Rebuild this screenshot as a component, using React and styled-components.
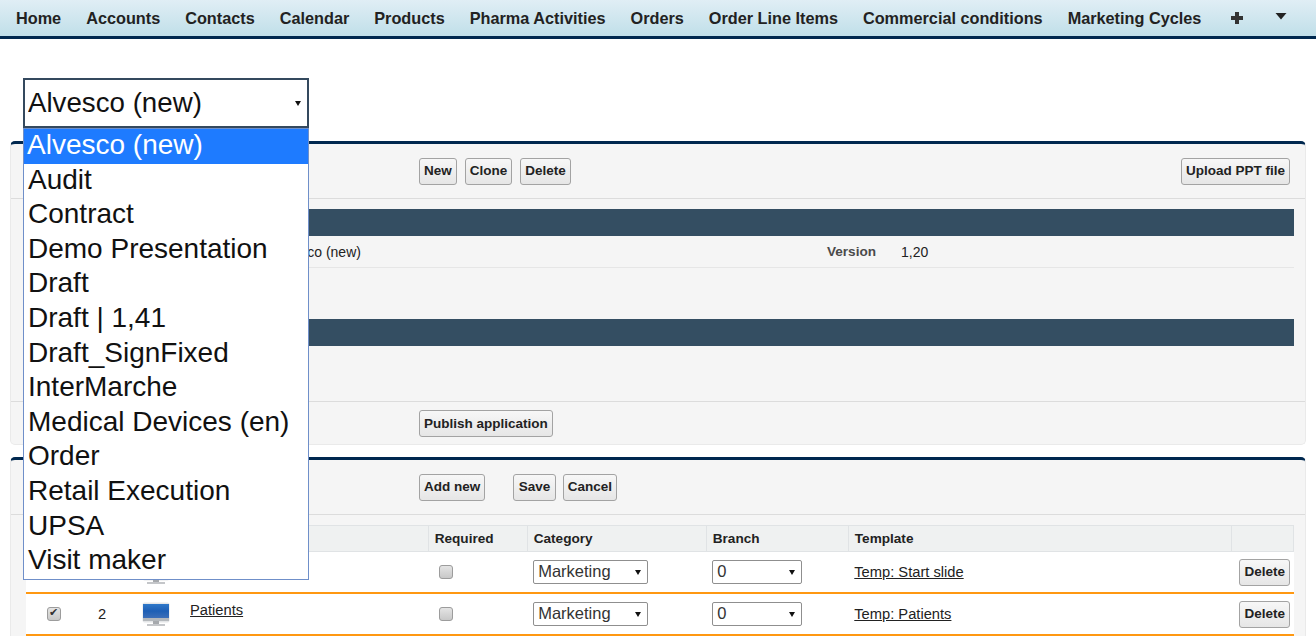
import styled, { createGlobalStyle } from 'styled-components';

const GlobalStyle = createGlobalStyle`
    html, body {
        margin: 0;
        height: 100%;
        overflow: hidden;
        background: #fff;
        font-family: "Liberation Sans", Arial, sans-serif;
        font-size: 14px;
        color: #222;
    }
`;

const NavBar = styled.nav`
    display: flex;
    align-items: center;
    gap: 25px;
    height: 36px;
    padding: 0 0 0 16px;
    background: linear-gradient(#e0eef5, #c0dfe9);
    border-bottom: 3px solid #00284f;
`;

const NavItem = styled.a`
    font-size: 16.25px;
    font-weight: bold;
    color: #222;
    white-space: nowrap;
`;

const NavIcon = styled.span`
    display: flex;
    align-items: center;
    margin-left: ${(p) => p.$shift || 0}px;
`;

const TopArea = styled.div`
    padding: 39px 0 0 23px;
    height: 63px;
`;

const SelectWrap = styled.div`
    position: relative;
    width: 286px;
`;

const AppSelect = styled.select`
    display: block;
    box-sizing: border-box;
    width: 286px;
    height: 50px;
    padding: 0 0 2px 3px;
    appearance: none;
    background: #fff;
    border: 2px solid #34495e;
    border-radius: 0;
    font-family: "Liberation Sans", Arial, sans-serif;
    font-size: 27.7px;
    color: #111;
`;

const SelectArrow = styled.span`
    position: absolute;
    right: ${(p) => p.$right}px;
    top: 50%;
    margin-top: -2px;
    border-left: ${(p) => p.$size}px solid transparent;
    border-right: ${(p) => p.$size}px solid transparent;
    border-top: ${(p) => p.$size + 2}px solid #111;
    pointer-events: none;
`;

const OptionList = styled.ul`
    position: absolute;
    z-index: 5;
    top: 50px;
    left: 0;
    box-sizing: border-box;
    width: 286px;
    height: 452px;
    margin: 0;
    padding: 0;
    list-style: none;
    background: #fff;
    border: 1px solid #6f8fc9;
`;

const OptionItem = styled.li`
    height: 34.6px;
    line-height: 32px;
    padding-left: ${(p) => (p.$active ? 3 : 4)}px;
    font-size: 28px;
    color: ${(p) => (p.$active ? '#fff' : '#111')};
    background: ${(p) => (p.$active ? '#1e7bff' : '#fff')};
    white-space: nowrap;
`;

const Panel = styled.section`
    box-sizing: border-box;
    margin: 0 10px ${(p) => p.$gap || 0}px;
    height: ${(p) => p.$height}px;
    background: #f5f5f5;
    border: 1px solid #eaeaea;
    border-top: 3px solid #00284f;
    border-radius: 5px;
`;

const PanelBar = styled.div`
    box-sizing: border-box;
    display: flex;
    align-items: center;
    gap: ${(p) => p.$gap || 8}px;
    height: ${(p) => p.$height}px;
    padding: 0 15px 0 408px;
    border-bottom: ${(p) => (p.$plain ? 0 : 1)}px solid #dcdcdc;
    border-top: ${(p) => (p.$top ? 1 : 0)}px solid #dcdcdc;
`;

const Button = styled.button`
    box-sizing: border-box;
    height: 27px;
    padding: 0 ${(p) => p.$pad || 4}px 1px;
    background: linear-gradient(#f7f7f7, #e6e6e6);
    border: 1px solid #a3a3a3;
    border-radius: 3px;
    font-family: "Liberation Sans", Arial, sans-serif;
    font-size: 13.5px;
    font-weight: bold;
    color: #222;
    white-space: nowrap;
    margin-left: ${(p) => p.$shift || 0}px;
`;

const Spacer = styled.div`
    flex: 1;
`;

const SectionBar = styled.div`
    height: 27px;
    margin: ${(p) => p.$top}px 11px 0 15px;
    background: #344e62;
`;

const SectionBody = styled.div`
    height: 55px;
`;

const DetailRow = styled.div`
    box-sizing: border-box;
    display: flex;
    align-items: center;
    height: 32px;
    margin: 0 11px 0 15px;
    border-bottom: 1px solid #e6e6e6;
`;

const DetailLabel = styled.span`
    margin-left: ${(p) => p.$left}px;
    font-size: 13.6px;
    font-weight: bold;
    color: #4a4a4a;
`;

const DetailValue = styled.span`
    margin-left: ${(p) => p.$left}px;
    font-size: 14px;
    color: #222;
`;

const ItemsTable = styled.table`
    width: 1268px;
    margin: 10px 0 0 15px;
    border-collapse: collapse;
    table-layout: fixed;
    background: #fff;
`;

const HeadCell = styled.th`
    box-sizing: border-box;
    height: 26px;
    padding: 0 0 0 6px;
    background: #eff1f1;
    border: 1px solid #e0e3e5;
    border-width: 1px 1px 1px 0;
    text-align: left;
    font-size: 13.6px;
    font-weight: bold;
    color: #222;
`;

const Row = styled.tr`
    border-bottom: 2px solid #ff9811;
`;

const Cell = styled.td`
    height: 40px;
    padding: 0 0 0 ${(p) => p.$pad || 0}px;
    text-align: ${(p) => p.$align || 'left'};
    vertical-align: middle;
    font-size: 14.7px;
`;

const Check = styled.input.attrs({ type: 'checkbox', readOnly: true })`
    appearance: none;
    position: relative;
    top: -1px;
    display: inline-block;
    box-sizing: border-box;
    width: 14px;
    height: 14px;
    margin: 0;
    vertical-align: middle;
    background: linear-gradient(#e4e4e4, #c8c8c8);
    border: 1px solid #9c9c9c;
    border-radius: 3px;

    &:checked::after {
        content: '✔';
        position: absolute;
        left: 1px;
        top: -2px;
        font-family: "DejaVu Sans", sans-serif;
        font-size: 11px;
        color: #333;
    }
`;

const RowLink = styled.a`
    color: #222;
    text-decoration: underline;
    position: relative;
    top: ${(p) => p.$lift || 0}px;
`;

const SmallSelect = styled.div`
    position: relative;
    width: ${(p) => p.$width}px;
`;

const SmallSelectBox = styled.select`
    display: block;
    box-sizing: border-box;
    width: 100%;
    height: 24px;
    padding: 0 0 2px 4px;
    appearance: none;
    background: #fff;
    border: 1px solid #8f8f8f;
    border-radius: 2px;
    font-family: "Liberation Sans", Arial, sans-serif;
    font-size: 16.5px;
    color: #333;
`;

const NAV_ITEMS = [
    'Home', 'Accounts', 'Contacts', 'Calendar', 'Products', 'Pharma Activities',
    'Orders', 'Order Line Items', 'Commercial conditions', 'Marketing Cycles',
];

const APPS = [
    'Alvesco (new)', 'Audit', 'Contract', 'Demo Presentation', 'Draft', 'Draft | 1,41',
    'Draft_SignFixed', 'InterMarche', 'Medical Devices (en)', 'Order', 'Retail Execution',
    'UPSA', 'Visit maker',
];

const COLUMNS = [48, 54, 54, 246, 99, 179, 142, 383, 62];

const SLIDES = [
    { num: 1, name: 'Start slide', template: 'Temp: Start slide', checked: true, nameLift: -4 },
    { num: 2, name: 'Patients', template: 'Temp: Patients', checked: true, nameLift: -4 },
];

function MonitorIcon() {
    return (
        <svg width="28" height="25" viewBox="0 0 28 25" style={{ display: 'block' }}>
            <defs>
                <linearGradient id="screen" x1="0" y1="0" x2="0" y2="1">
                    <stop offset="0" stopColor="#2f78c9" />
                    <stop offset="0.5" stopColor="#1e5fb5" />
                    <stop offset="1" stopColor="#3d6fb8" />
                </linearGradient>
            </defs>
            <rect x="0.5" y="0.5" width="27" height="20" rx="2" fill="#e4e6e8" />
            <rect x="1" y="2" width="26" height="14" fill="url(#screen)" />
            <rect x="1" y="16" width="26" height="3" fill="#b4b8bc" />
            <rect x="11" y="19" width="6" height="3" fill="#a6a9ad" />
            <rect x="5" y="22" width="18" height="2" fill="#c4c6c9" />
        </svg>
    );
}

function SlideRow({ slide }) {
    return (
        <Row>
            <Cell $pad={21}><Check defaultChecked={slide.checked} /></Cell>
            <Cell $pad={24}>{slide.num}</Cell>
            <Cell $pad={14}><MonitorIcon /></Cell>
            <Cell $pad={8}><RowLink $lift={slide.nameLift}>{slide.name}</RowLink></Cell>
            <Cell $pad={11}><Check /></Cell>
            <Cell $pad={6}>
                <SmallSelect $width={115}>
                    <SmallSelectBox defaultValue="Marketing"><option>Marketing</option></SmallSelectBox>
                    <SelectArrow $right={7} $size={3} />
                </SmallSelect>
            </Cell>
            <Cell $pad={6}>
                <SmallSelect $width={90}>
                    <SmallSelectBox defaultValue="0"><option>0</option></SmallSelectBox>
                    <SelectArrow $right={7} $size={3} />
                </SmallSelect>
            </Cell>
            <Cell $pad={6}><RowLink>{slide.template}</RowLink></Cell>
            <Cell $pad={8}><Button>Delete</Button></Cell>
        </Row>
    );
}

export default function App() {
    return (
        <>
            <GlobalStyle />
            <NavBar>
                {NAV_ITEMS.map((item) => <NavItem key={item}>{item}</NavItem>)}
                <NavIcon $shift={5}>
                    <svg width="12" height="12" viewBox="0 0 12 12">
                        <path d="M4 0h4v4h4v4H8v4H4V8H0V4h4z" fill="#333" />
                    </svg>
                </NavIcon>
                <NavIcon $shift={7}>
                    <svg width="12" height="14" viewBox="0 0 12 14">
                        <path d="M0.5 2h11L6 8.5z" fill="#222" />
                    </svg>
                </NavIcon>
            </NavBar>

            <TopArea>
                <SelectWrap>
                    <AppSelect defaultValue={APPS[0]}><option>{APPS[0]}</option></AppSelect>
                    <SelectArrow $right={8} $size={3} />
                    <OptionList>
                        {APPS.map((app, i) => (
                            <OptionItem key={app} $active={i === 0}>{app}</OptionItem>
                        ))}
                    </OptionList>
                </SelectWrap>
            </TopArea>

            <Panel $height={304} $gap={12}>
                <PanelBar $height={55}>
                    <Button>New</Button>
                    <Button>Clone</Button>
                    <Button>Delete</Button>
                    <Spacer />
                    <Button>Upload PPT file</Button>
                </PanelBar>
                <SectionBar $top={10} />
                <DetailRow>
                    <DetailValue $left={247}>Alvesco (new)</DetailValue>
                    <DetailLabel $left={466}>Version</DetailLabel>
                    <DetailValue $left={25}>1,20</DetailValue>
                </DetailRow>
                <SectionBar $top={51} />
                <SectionBody />
                <PanelBar $height={44} $plain $top>
                    <Button>Publish application</Button>
                </PanelBar>
            </Panel>

            <Panel $height={300}>
                <PanelBar $height={55} $gap={7}>
                    <Button>Add new</Button>
                    <Button $shift={21} $pad={4.5}>Save</Button>
                    <Button>Cancel</Button>
                </PanelBar>
                <ItemsTable>
                    <colgroup>
                        {COLUMNS.map((w, i) => <col key={i} style={{ width: w }} />)}
                    </colgroup>
                    <thead>
                        <tr>
                            <HeadCell />
                            <HeadCell />
                            <HeadCell />
                            <HeadCell>Name</HeadCell>
                            <HeadCell>Required</HeadCell>
                            <HeadCell>Category</HeadCell>
                            <HeadCell>Branch</HeadCell>
                            <HeadCell>Template</HeadCell>
                            <HeadCell />
                        </tr>
                    </thead>
                    <tbody>
                        {SLIDES.map((slide) => <SlideRow key={slide.num} slide={slide} />)}
                    </tbody>
                </ItemsTable>
            </Panel>
        </>
    );
}
